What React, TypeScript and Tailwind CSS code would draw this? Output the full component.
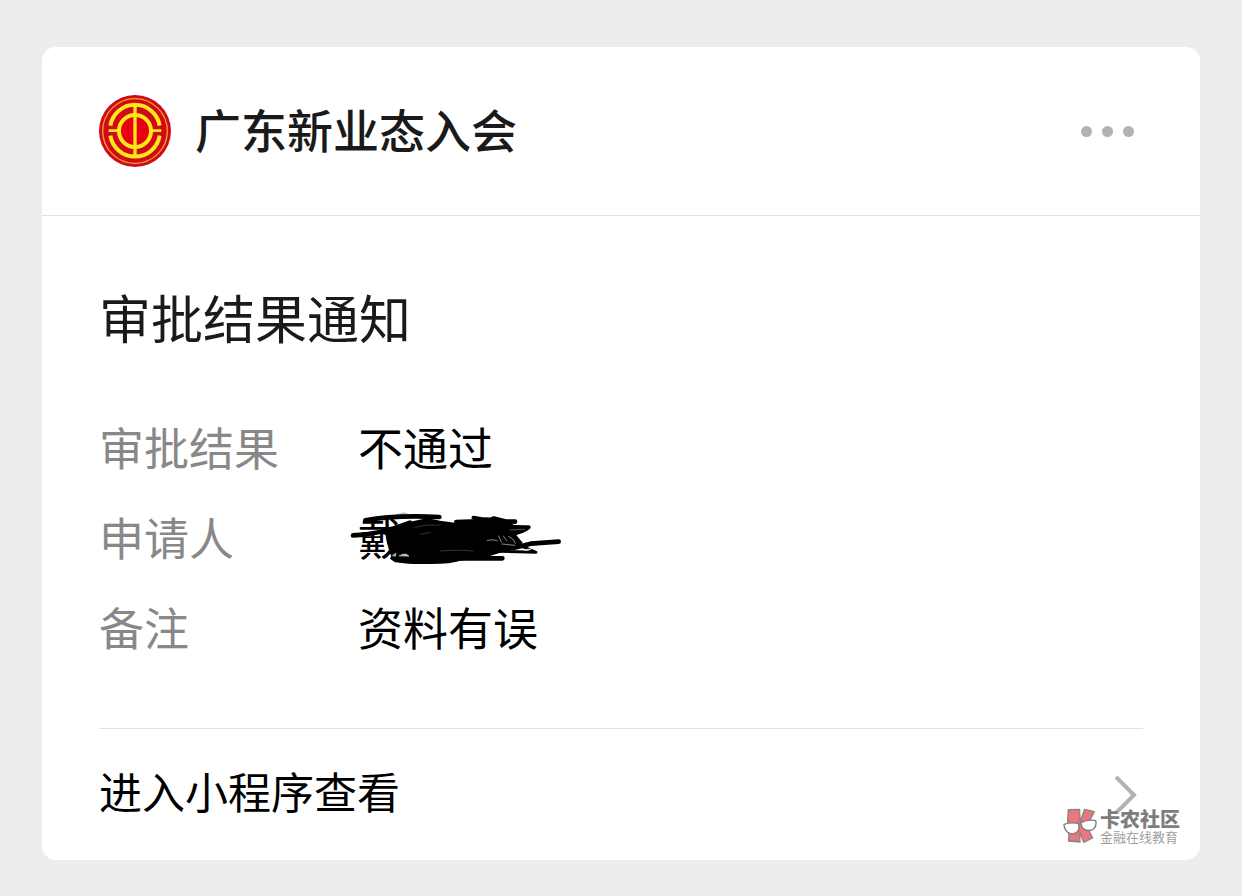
import React from 'react';

const rows = [
	{ label: '审批结果', value: '不通过' },
	{ label: '申请人', value: '戴', hidden: true },
	{ label: '备注', value: '资料有误' },
];

const UnionLogo = () => {
	return (
		<svg viewBox="0 0 216 216" className="size-[72px] shrink-0" aria-hidden="true">
			<circle cx="108" cy="108" r="108" fill="#d0091b" />
			<circle cx="108" cy="108" r="97" fill="none" stroke="#f3a51e" strokeWidth="4" />
			<circle cx="108" cy="108" r="42" fill="#e60012" />
			<g fill="none" stroke="#ffe817" strokeWidth="12">
				<path d="M34 92A75 75 0 0 1 182 92" />
				<path d="M34 122A75 75 0 0 0 182 122" />
				<circle cx="108" cy="108" r="48" />
				<path d="M108 30V186" strokeWidth="10" />
				<path d="M29 107H60M156 107H187" strokeWidth="8" />
			</g>
		</svg>
	);
};

const Scribble = () => {
	return (
		<svg
			viewBox="0 0 705 225"
			className="absolute -left-[18px] top-2 h-[75px] w-[235px] max-w-none"
			fill="none"
			stroke="#000"
			strokeLinecap="round"
			strokeLinejoin="round"
			aria-hidden="true"
		>
			<path d="M165 44L190 37L204 40L192 48Z" fill="#c4c4c4" stroke="none" />
			<path
				d="M110 98L160 84L208 66L262 54L300 62L344 68L400 60L440 52L500 60L520 74L572 80L550 96L528 104L548 128L532 146L500 152L476 160L450 168L400 176L350 184L290 190L220 190L165 187L150 176L158 158L142 132L136 104Z"
				fill="#000"
				stroke="none"
			/>
			<g strokeWidth="14">
				<path d="M76 61Q160 45 298 51" />
				<path d="M39 106Q120 104 210 68" />
				<path d="M349 66Q420 62 525 65" />
				<path d="M400 53L446 60L462 54L494 62" strokeWidth="11" />
				<path d="M420 82L566 82Q548 98 510 102" strokeWidth="12" />
				<path d="M656 125L572 131L520 144" />
				<path d="M480 154L588 157L548 140" strokeWidth="9" />
				<path d="M160 172Q164 187 260 185Q330 186 360 175H487" />
			</g>
			<g stroke="#fff" strokeWidth="2">
				<path d="M222 82Q260 72 300 75M240 103L272 97" opacity=".3" />
				<path
					d="M442 121Q460 117 472 122M476 108L484 126M490 108L500 122M506 110Q520 114 526 130M486 132L524 136"
					opacity=".8"
				/>
				<path d="M552 149L574 147L564 151Z" fill="#fff" />
				<path d="M300 153Q360 149 400 153" opacity=".3" />
				<path d="M158 166L168 160L166 168ZM178 167Q190 160 200 163L206 168Z" fill="#fff" opacity=".8" />
				<path d="M510 90L552 88" opacity=".5" />
			</g>
		</svg>
	);
};

const Watermark = () => {
	return (
		<div className="absolute right-5 bottom-4 flex items-center gap-[3px] text-[#7d7d7d]">
			<svg viewBox="0 0 102 108" className="h-9 w-[34px]" aria-hidden="true">
				<path
					d="M16 5L50 4L51 42L65 4L94 11L71 54L89 90L62 103L50 72L51 102L17 99L18 70L14 40Z"
					fill="#ec7680"
					stroke="#858585"
					strokeWidth="4"
					strokeLinejoin="round"
				/>
				<g fill="#fff" stroke="#7d7d7d" strokeWidth="4">
					<path d="M3 49Q22 42 46 46Q52 64 41 73Q28 82 14 73Q3 63 3 49Z" />
					<path d="M54 44Q76 33 98 38Q102 53 92 63Q79 71 65 64Q54 57 54 44Z" />
				</g>
			</svg>
			<div className="flex flex-col">
				<span className="text-[20px] leading-5 font-black">卡农社区</span>
				<span className="text-[13px] leading-[15px] text-[#a0a0a0]">金融在线教育</span>
			</div>
		</div>
	);
};

const App = () => {
	return (
		<main
			lang="zh-CN"
			className="min-h-screen bg-[#ededed] px-[42px] pt-[47px] pb-9 font-['Noto_Sans_CJK_SC',sans-serif] text-black"
		>
			<article className="relative rounded-[14px] bg-white">
				<header className="flex items-center justify-between border-b border-[#e2e2e2] py-12 pr-[66px] pl-[57px]">
					<div className="flex items-center gap-6">
						<UnionLogo />
						<h1 className="pb-1.5 text-[46px] leading-[66px] font-medium text-[#1a1a1a]">广东新业态入会</h1>
					</div>
					<button type="button" aria-label="更多" className="flex gap-2.5">
						<span className="size-[11px] rounded-full bg-[#b2b2b2]"></span>
						<span className="size-[11px] rounded-full bg-[#b2b2b2]"></span>
						<span className="size-[11px] rounded-full bg-[#b2b2b2]"></span>
					</button>
				</header>
				<section className="px-[57px] pt-[61px]">
					<h2 className="text-[52px] leading-20 text-[#1a1a1a]">审批结果通知</h2>
					<dl className="pt-[45px] pb-14 text-[45px] leading-[90px]">
						{rows.map((row) => (
							<div key={row.label} className="flex">
								<dt className="w-[259px] text-[#888888]">{row.label}</dt>
								<dd className="relative">
									{row.value}
									{row.hidden && <Scribble />}
								</dd>
							</div>
						))}
					</dl>
					<a href="#" className="flex items-center justify-between border-t border-[#e2e2e2] pr-1.5">
						<span className="pb-2 text-[43px] leading-[123px]">进入小程序查看</span>
						<svg viewBox="0 0 24 40" className="h-10 w-6" fill="none" stroke="#b2b2b2" strokeWidth="4" aria-hidden="true">
							<path d="M3 2L21 20L3 38" />
						</svg>
					</a>
				</section>
				<Watermark />
			</article>
		</main>
	);
};

export default App;
